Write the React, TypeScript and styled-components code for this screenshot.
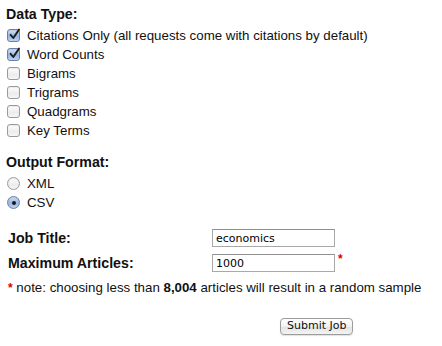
import React from "react";
import styled, { createGlobalStyle } from "styled-components";

const Global = createGlobalStyle`
  html, body { margin: 0; padding: 0; background: #fff; }
  body { font-family: "Liberation Sans", Arial, sans-serif; color: #111; }
`;

const Page = styled.div`
  width: 442px;
  height: 346px;
  padding: 5px 0 0 6px;
  box-sizing: border-box;
  font-size: 13.3px;
`;

const Heading = styled.div`
  font-weight: bold;
  font-size: 14.2px;
  line-height: 18px;
  margin-bottom: 3px;
`;

const Section = styled.div<{ $gap?: number }>`
  margin-bottom: ${(p) => p.$gap ?? 0}px;
`;

const OptionRow = styled.label`
  display: flex;
  align-items: center;
  height: 19px;
  gap: 7px;
  padding-left: 1px;
`;

const Box = styled.span<{ $checked?: boolean; $round?: boolean }>`
  width: 13px;
  height: 13px;
  box-sizing: border-box;
  border-radius: ${(p) => (p.$round ? "50%" : "3px")};
  border: 1px solid ${(p) => (p.$checked ? "#6a7fa6" : "#9a9a9a")};
  background: ${(p) =>
    p.$checked
      ? "linear-gradient(#d2e0f5, #98b5e2 55%, #bcd2f2)"
      : "linear-gradient(#ffffff, #ececec 60%, #f6f6f6)"};
  box-shadow: inset 0 1px 1px rgba(0,0,0,0.08);
  display: inline-flex;
  align-items: center;
  justify-content: center;
  position: relative;
  flex: none;
`;

const Dot = styled.span`
  width: 4px;
  height: 4px;
  border-radius: 50%;
  background: #1a1a1a;
`;

const Check = () => (
  <svg width="13" height="13" viewBox="0 0 13 13" style={{ position: "absolute", left: 0, top: -2 }}>
    <path d="M2.6 6.8 L5.3 10 L11 1.6" fill="none" stroke="#1d1d1d" strokeWidth="1.9" strokeLinecap="round" strokeLinejoin="round" />
  </svg>
);

const FormGrid = styled.div`
  display: grid;
  grid-template-columns: 204px auto;
  row-gap: 7px;
  padding-left: 2px;
  align-items: center;
`;

const FieldLabel = styled.div`
  font-weight: bold;
  font-size: 14.2px;
`;

const FieldCell = styled.div`
  display: flex;
  align-items: flex-start;
  gap: 3px;
`;

const TextInput = styled.input`
  width: 123px;
  height: 18px;
  box-sizing: border-box;
  border: 1px solid #a9a9a9;
  border-top-color: #8f8f8f;
  padding: 1px 3px 0;
  font-family: "DejaVu Sans", "Liberation Sans", sans-serif;
  font-size: 11px;
  color: #000;
  outline: none;
`;

const Star = styled.span`
  color: #e00000;
  font-weight: bold;
  font-size: 12px;
  line-height: 10px;
`;

const Note = styled.div`
  margin-top: 8px;
  padding-left: 2px;
  line-height: 16px;
  b { font-weight: bold; }
`;

const ButtonRow = styled.div`
  margin-top: 21px;
  padding-left: 274px;
`;

const Button = styled.button`
  height: 17px;
  padding: 0 6px;
  border: 1px solid #9c9c9c;
  border-radius: 4px;
  background: linear-gradient(#ffffff, #f1f1f1 50%, #e2e2e2 51%, #f4f4f4);
  font-family: "DejaVu Sans", "Liberation Sans", sans-serif;
  font-size: 11px;
  color: #111;
  line-height: 14px;
  box-shadow: 0 1px 1px rgba(0,0,0,0.12);
`;

const dataTypes: [string, boolean][] = [
  ["Citations Only (all requests come with citations by default)", true],
  ["Word Counts", true],
  ["Bigrams", false],
  ["Trigrams", false],
  ["Quadgrams", false],
  ["Key Terms", false],
];

export default function App() {
  return (
    <>
      <Global />
      <Page>
        <Section $gap={13}>
          <Heading>Data Type:</Heading>
          {dataTypes.map(([t, c]) => (
            <OptionRow key={t}>
              <Box $checked={c}>{c && <Check />}</Box>
              {t}
            </OptionRow>
          ))}
        </Section>
        <Section $gap={17}>
          <Heading>Output Format:</Heading>
          <OptionRow>
            <Box $round />
            XML
          </OptionRow>
          <OptionRow>
            <Box $round $checked>
              <Dot />
            </Box>
            CSV
          </OptionRow>
        </Section>
        <FormGrid>
          <FieldLabel>Job Title:</FieldLabel>
          <FieldCell>
            <TextInput defaultValue="economics" />
          </FieldCell>
          <FieldLabel>Maximum Articles:</FieldLabel>
          <FieldCell>
            <TextInput defaultValue="1000" />
            <Star>*</Star>
          </FieldCell>
        </FormGrid>
        <Note>
          <Star>*</Star> note: choosing less than <b>8,004</b> articles will result in a random sample
        </Note>
        <ButtonRow>
          <Button>Submit Job</Button>
        </ButtonRow>
      </Page>
    </>
  );
}
